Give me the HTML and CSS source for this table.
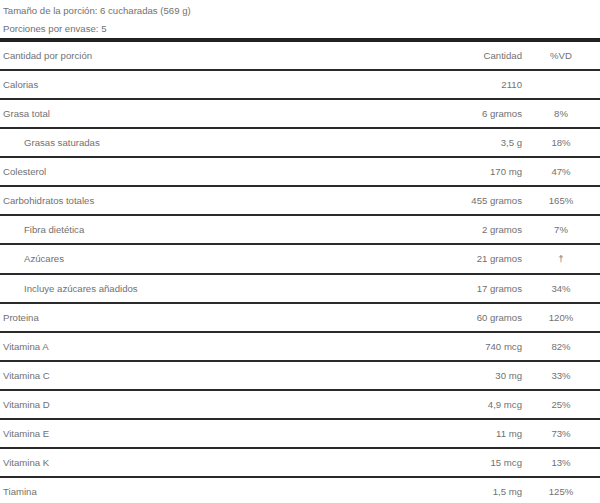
FILE: index.html
```html
<!DOCTYPE html>
<html lang="es">
<head>
<meta charset="utf-8">
<link rel="stylesheet" href="styles.css">
</head>
<body>
<div class="label">
  <div class="meta">
    <p>Tamaño de la porción: 6 cucharadas (569 g)</p>
    <p>Porciones por envase: 5</p>
  </div>
  <table class="facts">
    <thead>
      <tr><th class="name">Cantidad por porción</th><th class="amt">Cantidad</th><th class="dv">%VD</th></tr>
    </thead>
    <tbody>
      <tr><td class="name">Calorias</td><td class="amt">2110</td><td class="dv"></td></tr>
      <tr><td class="name">Grasa total</td><td class="amt">6 gramos</td><td class="dv">8%</td></tr>
      <tr><td class="name sub">Grasas saturadas</td><td class="amt">3,5 g</td><td class="dv">18%</td></tr>
      <tr><td class="name">Colesterol</td><td class="amt">170 mg</td><td class="dv">47%</td></tr>
      <tr><td class="name">Carbohidratos totales</td><td class="amt">455 gramos</td><td class="dv">165%</td></tr>
      <tr><td class="name sub">Fibra dietética</td><td class="amt">2 gramos</td><td class="dv">7%</td></tr>
      <tr><td class="name sub">Azúcares</td><td class="amt">21 gramos</td><td class="dv">†</td></tr>
      <tr><td class="name sub">Incluye azúcares añadidos</td><td class="amt">17 gramos</td><td class="dv">34%</td></tr>
      <tr><td class="name">Proteina</td><td class="amt">60 gramos</td><td class="dv">120%</td></tr>
      <tr><td class="name">Vitamina A</td><td class="amt">740 mcg</td><td class="dv">82%</td></tr>
      <tr><td class="name">Vitamina C</td><td class="amt">30 mg</td><td class="dv">33%</td></tr>
      <tr><td class="name">Vitamina D</td><td class="amt">4,9 mcg</td><td class="dv">25%</td></tr>
      <tr><td class="name">Vitamina E</td><td class="amt">11 mg</td><td class="dv">73%</td></tr>
      <tr><td class="name">Vitamina K</td><td class="amt">15 mcg</td><td class="dv">13%</td></tr>
      <tr><td class="name">Tiamina</td><td class="amt">1,5 mg</td><td class="dv">125%</td></tr>
    </tbody>
  </table>
</div>
</body>
</html>
```
FILE: styles.css
```css
html, body {
  margin: 0;
  padding: 0;
  background: #fff;
}
.label {
  font-family: "Liberation Sans", Arial, sans-serif;
  font-size: 9.6px;
  color: #717171;
  width: 600px;
}
.meta {
  padding-top: 2px;
}
.meta p {
  margin: 0;
  padding-left: 3px;
  line-height: 18px;
}
.facts {
  width: 100%;
  border-collapse: collapse;
  border-top: 4px solid #222;
}
.facts th,
.facts td {
  font-weight: normal;
  height: 27.07px;
  padding: 0;
  line-height: 17px;
  border-bottom: 2px solid #2a2a2a;
  vertical-align: middle;
}
.facts tr:last-child td {
  border-bottom: none;
}
.name {
  text-align: left;
  padding-left: 3px !important;
}
.name.sub {
  padding-left: 24px !important;
}
.amt {
  text-align: right;
  width: 120px;
}
.dv {
  text-align: center;
  width: 78px;
}
```
